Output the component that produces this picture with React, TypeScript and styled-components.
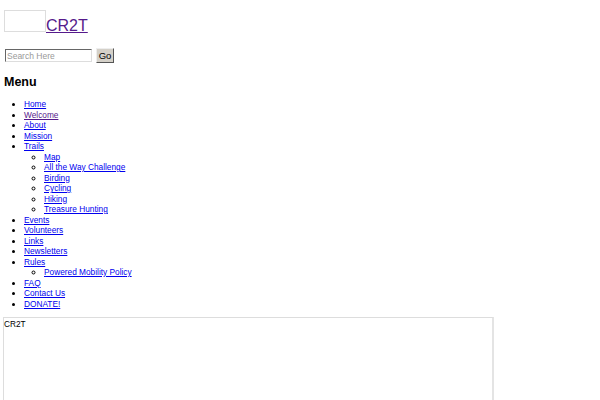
import React from "react";
import styled, { createGlobalStyle } from "styled-components";

const GlobalStyle = createGlobalStyle`
  body {
    margin: 0;
    padding: 0 4px;
    background: #fff;
    font-family: "Liberation Sans", Arial, sans-serif;
    font-size: 8.3px;
    color: #000;
  }
`;

const Header = styled.div`
  display: flex;
  align-items: flex-end;
  padding-top: 10px;
  height: 22px;
`;

const LogoBox = styled.div`
  width: 40px;
  height: 20px;
  border: 1px solid #ddd;
`;

const SiteLink = styled.a`
  font-size: 16px;
  line-height: 16px;
  color: #551a8b;
  margin-bottom: -2px;
`;

const SearchForm = styled.form`
  display: flex;
  align-items: center;
  gap: 4px;
  margin-top: 16px;
  padding-left: 1px;
  height: 15px;
`;

const SearchInput = styled.input`
  width: 83px;
  height: 11px;
  padding: 0 1px;
  margin: 0;
  border: 1px solid #ddd;
  border-top-color: #666;
  border-left-color: #666;
  font-family: "Liberation Sans", Arial, sans-serif;
  font-size: 8.5px;
  &::placeholder {
    color: #999;
  }
`;

const GoButton = styled.button`
  height: 15px;
  width: 18px;
  padding: 0;
  margin: 0;
  background: #d4d0c8;
  border: 1px solid #555;
  border-top-color: #eee;
  border-left-color: #eee;
  font-family: "Liberation Sans", Arial, sans-serif;
  font-size: 9.5px;
  color: #000;
`;

const MenuTitle = styled.h2`
  font-size: 12.5px;
  font-weight: bold;
  margin: 11px 0 0;
  line-height: 16px;
`;

const List = styled.ul<{ $nested?: boolean }>`
  list-style: ${(p) => (p.$nested ? "circle" : "disc")};
  margin: ${(p) => (p.$nested ? "0" : "9px 0 0")};
  padding-left: 20px;
  line-height: 10.5px;
`;

const Link = styled.a<{ $visited?: boolean }>`
  color: ${(p) => (p.$visited ? "#551a8b" : "#0000ee")};
`;

const Frame = styled.div`
  margin: 8px 0 0 -1px;
  width: 488px;
  height: 120px;
  border: 1px solid #ddd;
  border-right: 2px solid #e4e4e4;
  padding: 1px 0;
  line-height: 10px;
`;

type Item = { label: string; visited?: boolean; children?: string[] };

const menu: Item[] = [
  { label: "Home" },
  { label: "Welcome", visited: true },
  { label: "About" },
  { label: "Mission" },
  {
    label: "Trails",
    children: ["Map", "All the Way Challenge", "Birding", "Cycling", "Hiking", "Treasure Hunting"],
  },
  { label: "Events" },
  { label: "Volunteers" },
  { label: "Links" },
  { label: "Newsletters" },
  { label: "Rules", children: ["Powered Mobility Policy"] },
  { label: "FAQ" },
  { label: "Contact Us" },
  { label: "DONATE!" },
];

export default function App() {
  return (
    <>
      <GlobalStyle />
      <Header>
        <LogoBox />
        <SiteLink href="#">CR2T</SiteLink>
      </Header>
      <SearchForm onSubmit={(e) => e.preventDefault()}>
        <SearchInput placeholder="Search Here" />
        <GoButton type="submit">Go</GoButton>
      </SearchForm>
      <MenuTitle>Menu</MenuTitle>
      <List>
        {menu.map((item) => (
          <li key={item.label}>
            <Link href="#" $visited={item.visited}>
              {item.label}
            </Link>
            {item.children && (
              <List $nested>
                {item.children.map((c) => (
                  <li key={c}>
                    <Link href="#">{c}</Link>
                  </li>
                ))}
              </List>
            )}
          </li>
        ))}
      </List>
      <Frame>CR2T</Frame>
    </>
  );
}
